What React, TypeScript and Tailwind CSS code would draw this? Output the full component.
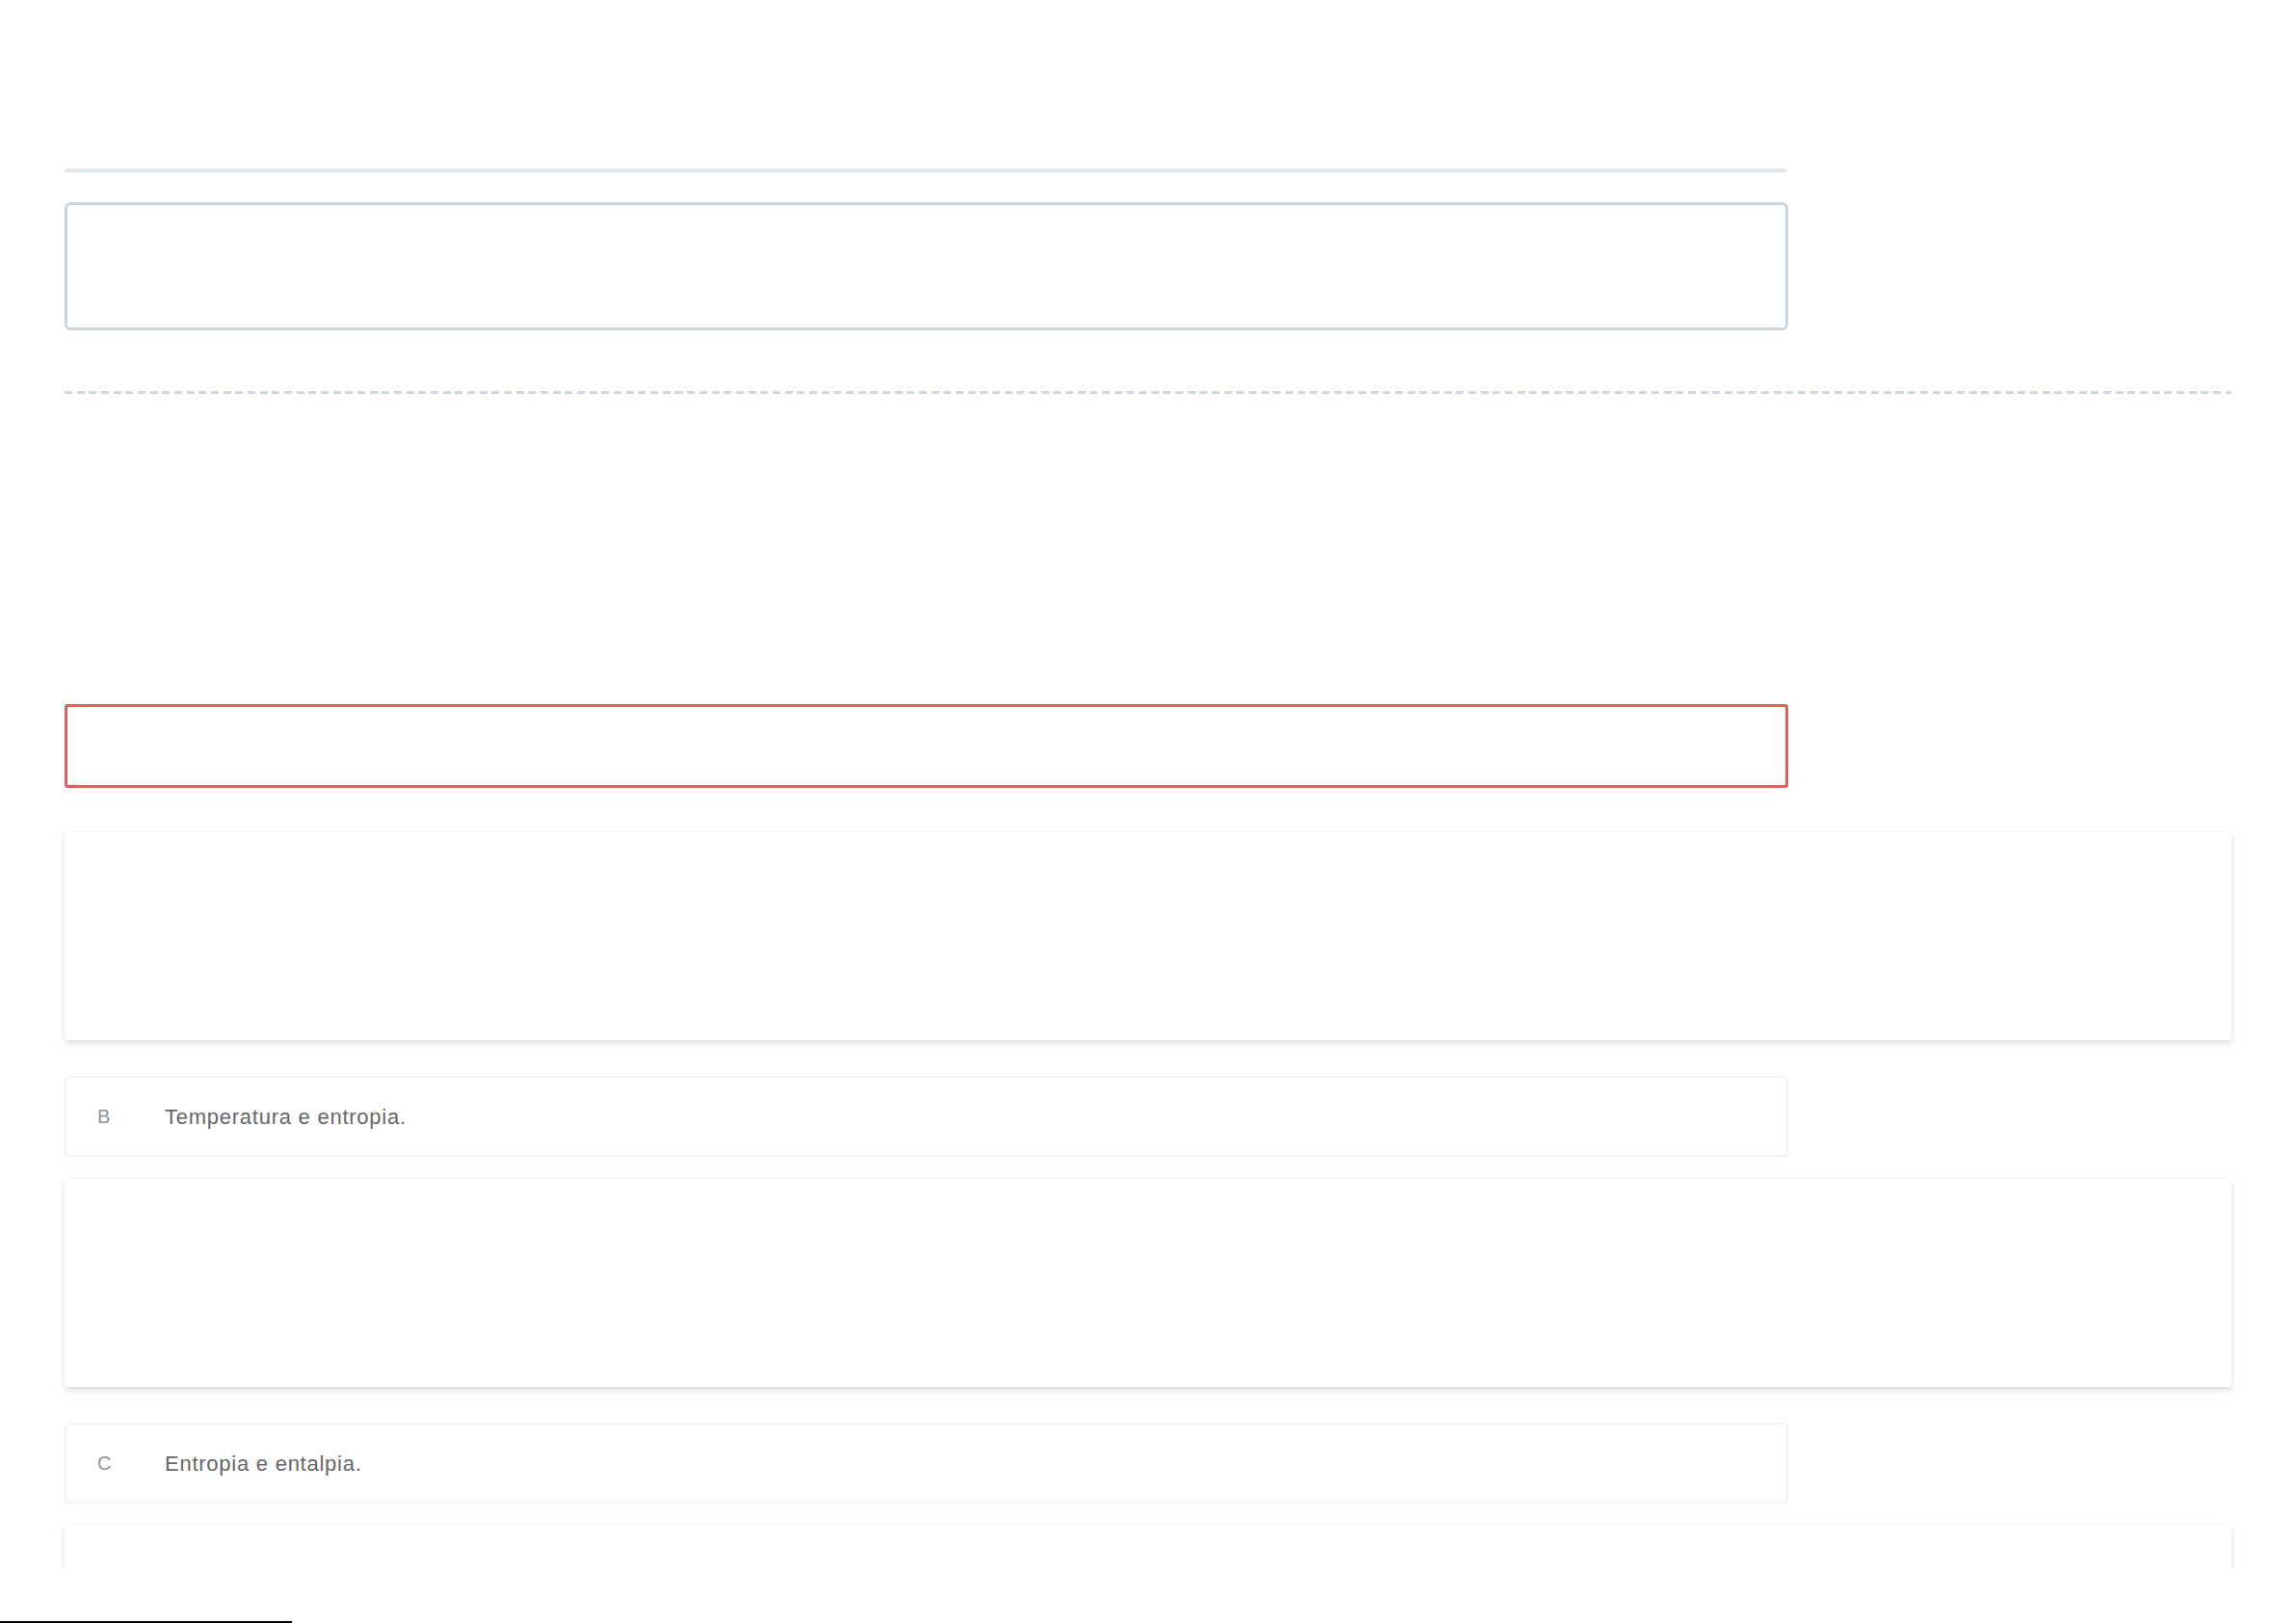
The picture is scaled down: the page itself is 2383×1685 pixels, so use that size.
import React from 'react';

const Card: React.FC = () => (
  <div className="h-[216px] w-full shrink-0 rounded-[4px] bg-white shadow-[0_0_2px_rgba(0,0,0,0.06),0_3px_6px_rgba(0,0,0,0.14)]" />
);

const OptionRow: React.FC<{ letter: string; text: string }> = ({ letter, text }) => (
  <div className="flex h-[84px] w-[1789px] shrink-0 items-center rounded-[4px] border-2 border-[#f0f4f4] bg-white">
    <span className="w-[102px] pl-[32px] text-[20px] text-[#8793a0]">{letter}</span>
    <span className="text-[22px] tracking-[0.75px] text-[#666666]">{text}</span>
  </div>
);

const App: React.FC = () => {
  return (
    <div
      className="flex h-[1685px] w-full flex-col overflow-hidden bg-white"
      style={{ fontFamily: '"Liberation Sans", Arial, sans-serif' }}
    >
      <div className="h-[1628px] overflow-hidden px-[67px] pt-[175px]">
        <div className="h-[4px] w-[1787px] bg-[#e3e8ec]" />

        <div className="mt-[31px] h-[133px] w-[1789px] rounded-[6px] border-[3px] border-[#ccd6df]" />

        <div className="mt-[63px] h-[3px] w-full bg-[repeating-linear-gradient(to_right,#cfd8e0_0px,#cfd8e0_8px,transparent_8px,transparent_12.67px)]" />

        <div className="mt-[322px] h-[87px] w-[1789px] rounded-[3px] border-[3px] border-[#f05a5a]" />

        <div className="mt-[46px] flex flex-col">
          <Card />
          <div className="mt-[37px]">
            <OptionRow letter="B" text="Temperatura e entropia." />
          </div>
          <div className="mt-[23px]">
            <Card />
          </div>
          <div className="mt-[37px]">
            <OptionRow letter="C" text="Entropia e entalpia." />
          </div>
          <div className="mt-[22px]">
            <Card />
          </div>
        </div>
      </div>
      <div className="flex-1" />
      <div className="h-[2px] w-[303px] bg-black" />
    </div>
  );
};

export default App;
